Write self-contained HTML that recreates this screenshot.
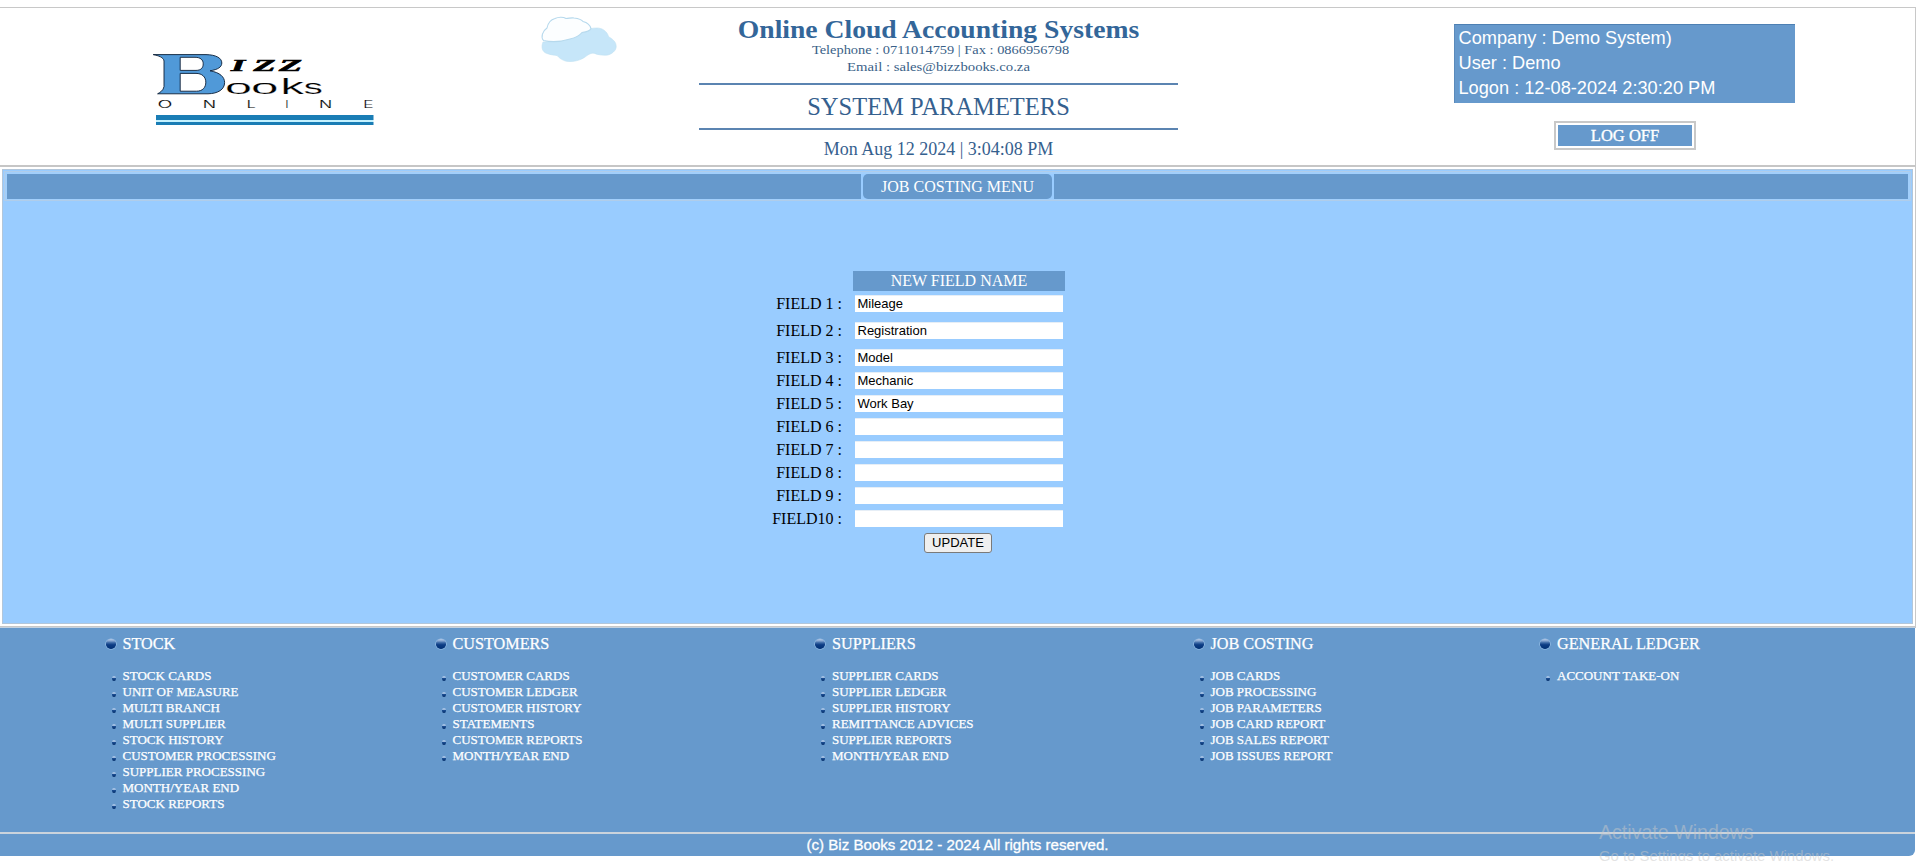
<!DOCTYPE html>
<html>
<head>
<meta charset="utf-8">
<style>
html,body{margin:0;padding:0;background:#fff;width:1919px;height:861px;overflow:hidden;position:relative;}
.a{position:absolute;white-space:nowrap;line-height:1;}
.serif{font-family:"Liberation Serif",serif;}
.sans{font-family:"Liberation Sans",sans-serif;}
.ctr{text-align:center;}
.bb{width:10px;height:10px;border-radius:50%;background:linear-gradient(#b8cce8 0%,#8aa8d2 18%,#3a68a6 38%,#0c3c84 58%,#003074 100%);box-shadow:0 0 0 0.6px rgba(170,205,240,0.8);}
.sb{width:4.6px;height:5px;border-radius:50%;background:linear-gradient(#a8c4e6 0%,#a8c4e6 28%,#1a4c90 50%,#002a66 100%);}
.fi{font-size:13px;color:#fff;-webkit-text-stroke:0.25px #fff;}
.fh{font-size:16.2px;color:#fff;-webkit-text-stroke:0.25px #fff;}
</style>
</head>
<body>
<div class="a" style="left:0;top:7px;width:1915px;height:1px;background:#c8c8c8"></div>
<div class="a" style="left:1915px;top:7px;width:1px;height:621px;background:#c8c8c8"></div>
<div class="a" style="left:0;top:165px;width:1915px;height:2px;background:#c6c6c6"></div>
<svg class="a" style="left:0;top:0" width="640" height="165" viewBox="0 0 640 165">
<path d="M153.2 54.6 L206 54.6 C216 54.8 221.8 58 221.8 63 C221.8 67 218 69.6 210 70.8 C220 72.5 224.6 77 224.6 82.5 C224.6 89.5 218 93.6 208 93.8 L157.6 93.8 C159.5 92.8 163.6 90.5 164 86.5 L164 61 C163.8 57.5 158.5 55.6 153.2 54.6 Z M180.2 57.3 L180.2 70.4 L196 70.4 C201 70.4 203.2 67.8 203.2 63.8 C203.2 59.8 200.5 57.3 195 57.3 Z M180.2 73.4 L180.2 91.2 L196.5 91.2 C202.6 91.2 205.8 87.5 205.8 82.2 C205.8 76.8 202 73.4 196 73.4 Z" fill="#5099d8" fill-rule="evenodd" stroke="#0c1e36" stroke-width="0.9"/>
<g font-family="Liberation Serif" font-weight="bold" font-style="italic" font-size="16.8" fill="#000" stroke="#000" stroke-width="0.6">
<text x="231" y="70.9" textLength="14" lengthAdjust="spacingAndGlyphs">I</text>
<text x="253.5" y="70.9" textLength="22" lengthAdjust="spacingAndGlyphs">Z</text>
<text x="279" y="70.9" textLength="23" lengthAdjust="spacingAndGlyphs">Z</text>
</g>
<g font-family="Liberation Sans" font-size="21" fill="#000" stroke="#fff" stroke-width="0.2">
<text x="225" y="93.5" textLength="27" lengthAdjust="spacingAndGlyphs">o</text>
<text x="251" y="93.5" textLength="27.5" lengthAdjust="spacingAndGlyphs">o</text>
<text x="280.5" y="93.5" font-size="22.5" textLength="23.5" lengthAdjust="spacingAndGlyphs">k</text>
<text x="303.8" y="93.5" textLength="19" lengthAdjust="spacingAndGlyphs">s</text>
</g>
<g font-family="Liberation Sans" font-size="10" fill="#000" stroke="#fff" stroke-width="0.12">
<text x="157.8" y="107.6" textLength="14.4" lengthAdjust="spacingAndGlyphs">O</text>
<text x="202.7" y="107.6" textLength="13.3" lengthAdjust="spacingAndGlyphs">N</text>
<text x="246.8" y="107.6" textLength="8.7" lengthAdjust="spacingAndGlyphs">L</text>
<text x="285.6" y="107.6" textLength="2.8" lengthAdjust="spacingAndGlyphs">I</text>
<text x="319" y="107.6" textLength="13.2" lengthAdjust="spacingAndGlyphs">N</text>
<text x="363.4" y="107.6" textLength="9.6" lengthAdjust="spacingAndGlyphs">E</text>
</g>
<rect x="156" y="115" width="217.5" height="5" fill="#1a7db5"/>
<rect x="156" y="120" width="217.5" height="2" fill="#c4f2ff"/>
<rect x="156" y="122" width="217.5" height="3" fill="#1a7db5"/>
<path d="M543 42 C541 47 542 52 547 53.5 C551 55 554 55 557 55.5 C561 60 566 61.8 570 61.5 C577 61.5 583 59 587 55.5 C590 53.5 592 53 594 53.2 C598 55 603 55.5 608 55 C614 53 617 49 616 45 C615.5 41 612 39 608.5 36.5 C607 31 602 28 597 28 C592 28 589 29 587 30 L560 41 Z" fill="#c6e6f9" stroke="#c0e0f2" stroke-width="0.6"/>
<path d="M543.5 40.5 C540.5 37 542.5 31 547 28 C548 23 551 19.5 555 18.5 C558 17 563 16.5 566 18.5 C569 18.5 571 17.5 574 18 C578 18.5 582 20 583 21.5 C587 22.5 590 25 591 28.5 C590 31 586 32 582 32.5 C580 35 576 37.5 570 39 C562 41.5 552 42.5 543.5 40.5 Z" fill="#fcfeff" stroke="#b6d9ed" stroke-width="1.1"/>
</svg>
<div class="a serif ctr" style="left:638px;width:601px;top:16.6px;font-size:25px;color:#336699;font-weight:bold;transform:scaleX(1.105);transform-origin:50% 0">Online Cloud Accounting Systems</div>
<div class="a serif ctr" style="left:639.5px;width:601px;top:42.7px;font-size:13.4px;color:#3a5f88;transform:scaleX(1.075);transform-origin:50% 0">Telephone : 0711014759 | Fax : 0866956798</div>
<div class="a serif ctr" style="left:638px;width:601px;top:59.5px;font-size:13.4px;color:#3a5f88;transform:scaleX(1.1);transform-origin:50% 0">Email : sales@bizzbooks.co.za</div>
<div class="a" style="left:699px;top:83px;width:479px;height:2px;background:#5b84b1"></div>
<div class="a serif ctr" style="left:638px;width:601px;top:94.7px;font-size:24.5px;color:#35608e;">SYSTEM PARAMETERS</div>
<div class="a" style="left:699px;top:128px;width:479px;height:2px;background:#5b84b1"></div>
<div class="a serif ctr" style="left:638px;width:601px;top:139.5px;font-size:18px;color:#35608e;">Mon Aug 12 2024 | 3:04:08 PM</div>
<div class="a" style="left:1454px;top:24px;width:340px;height:78px;background:#6699cc;border-top:1px solid #4d80b3;border-left:1px solid #5a8abb"></div>
<div class="a sans" style="left:1458.5px;top:28.5px;font-size:18.2px;color:#fff">Company : Demo System)</div>
<div class="a sans" style="left:1458.5px;top:53.5px;font-size:18.2px;color:#fff">User : Demo</div>
<div class="a sans" style="left:1458.5px;top:78.5px;font-size:18.2px;color:#fff">Logon : 12-08-2024 2:30:20 PM</div>
<div class="a" style="left:1554px;top:121px;width:138px;height:25px;border:2px solid #c8c8c8;background:#fff"></div>
<div class="a" style="left:1558px;top:125px;width:134px;height:21px;background:#6699cc"></div>
<div class="a serif ctr" style="left:1558px;top:128px;width:134px;font-size:16.5px;color:#fff;-webkit-text-stroke:0.35px #fff">LOG OFF</div>
<div class="a" style="left:2px;top:169px;width:1909px;height:453px;border:1px solid #b2c6da;background:#99ccff"></div>
<div class="a" style="left:4px;top:171px;width:1905px;height:28px;border:1px solid #b0cdea;background:#a2cffb"></div>
<div class="a" style="left:7px;top:174px;width:1901px;height:25px;background:#6699cc"></div>
<div class="a" style="left:861px;top:174px;width:193px;height:25px;background:#99ccff"></div>
<div class="a" style="left:863px;top:174px;width:189px;height:25px;background:#6699cc;border-radius:5px"></div>
<div class="a serif ctr" style="left:863px;top:179px;width:189px;font-size:16px;color:#fff">JOB COSTING MENU</div>
<div class="a" style="left:853px;top:271px;width:212px;height:20px;background:#6699cc"></div>
<div class="a serif ctr" style="left:853px;top:273px;width:212px;font-size:16px;color:#fff">NEW FIELD NAME</div>
<div class="a serif" style="left:700px;width:142px;text-align:right;top:296px;font-size:16px;color:#000">FIELD 1 :</div>
<div class="a" style="left:855px;top:295px;width:208px;height:17px;background:#fff;box-shadow:inset 0 1px 0 #e6eef6"></div>
<div class="a sans" style="left:857.5px;top:297px;font-size:13px;color:#000">Mileage</div>
<div class="a serif" style="left:700px;width:142px;text-align:right;top:323px;font-size:16px;color:#000">FIELD 2 :</div>
<div class="a" style="left:855px;top:322px;width:208px;height:17px;background:#fff;box-shadow:inset 0 1px 0 #e6eef6"></div>
<div class="a sans" style="left:857.5px;top:324px;font-size:13px;color:#000">Registration</div>
<div class="a serif" style="left:700px;width:142px;text-align:right;top:350px;font-size:16px;color:#000">FIELD 3 :</div>
<div class="a" style="left:855px;top:349px;width:208px;height:17px;background:#fff;box-shadow:inset 0 1px 0 #e6eef6"></div>
<div class="a sans" style="left:857.5px;top:351px;font-size:13px;color:#000">Model</div>
<div class="a serif" style="left:700px;width:142px;text-align:right;top:373px;font-size:16px;color:#000">FIELD 4 :</div>
<div class="a" style="left:855px;top:372px;width:208px;height:17px;background:#fff;box-shadow:inset 0 1px 0 #e6eef6"></div>
<div class="a sans" style="left:857.5px;top:374px;font-size:13px;color:#000">Mechanic</div>
<div class="a serif" style="left:700px;width:142px;text-align:right;top:396px;font-size:16px;color:#000">FIELD 5 :</div>
<div class="a" style="left:855px;top:395px;width:208px;height:17px;background:#fff;box-shadow:inset 0 1px 0 #e6eef6"></div>
<div class="a sans" style="left:857.5px;top:397px;font-size:13px;color:#000">Work Bay</div>
<div class="a serif" style="left:700px;width:142px;text-align:right;top:419px;font-size:16px;color:#000">FIELD 6 :</div>
<div class="a" style="left:855px;top:418px;width:208px;height:17px;background:#fff;box-shadow:inset 0 1px 0 #e6eef6"></div>
<div class="a serif" style="left:700px;width:142px;text-align:right;top:442px;font-size:16px;color:#000">FIELD 7 :</div>
<div class="a" style="left:855px;top:441px;width:208px;height:17px;background:#fff;box-shadow:inset 0 1px 0 #e6eef6"></div>
<div class="a serif" style="left:700px;width:142px;text-align:right;top:465px;font-size:16px;color:#000">FIELD 8 :</div>
<div class="a" style="left:855px;top:464px;width:208px;height:17px;background:#fff;box-shadow:inset 0 1px 0 #e6eef6"></div>
<div class="a serif" style="left:700px;width:142px;text-align:right;top:488px;font-size:16px;color:#000">FIELD 9 :</div>
<div class="a" style="left:855px;top:487px;width:208px;height:17px;background:#fff;box-shadow:inset 0 1px 0 #e6eef6"></div>
<div class="a serif" style="left:700px;width:142px;text-align:right;top:511px;font-size:16px;color:#000">FIELD10 :</div>
<div class="a" style="left:855px;top:510px;width:208px;height:17px;background:#fff;box-shadow:inset 0 1px 0 #e6eef6"></div>
<div class="a" style="left:924px;top:533px;width:66px;height:18px;border:1px solid #7a7a7a;border-radius:3px;background:#efefef"></div>
<div class="a sans ctr" style="left:924px;top:536px;width:68px;font-size:13px;color:#000">UPDATE</div>
<div class="a" style="left:0;top:626px;width:1915px;height:1px;background:#c8c8c8"></div>
<div class="a" style="left:0;top:627px;width:1915px;height:1px;background:#c4d2e0"></div>
<div class="a" style="left:0;top:628px;width:1915px;height:228px;background:#6699cc;border-bottom-right-radius:6px"></div>
<div class="a" style="left:0;top:832px;width:1915px;height:2px;background:#cad3dc"></div>
<div class="a sans ctr" style="left:0;top:837px;width:1915px;font-size:15.1px;color:#fff;-webkit-text-stroke:0.3px #fff">(c) Biz Books 2012 - 2024 All rights reserved.</div>
<div class="a bb" style="left:106.3px;top:639px;width:9.6px;height:9.6px"></div>
<div class="a serif fh" style="left:122.5px;top:636px">STOCK</div>
<div class="a sb" style="left:111.5px;top:676px"></div>
<div class="a serif fi" style="left:122.5px;top:669px">STOCK CARDS</div>
<div class="a sb" style="left:111.5px;top:692px"></div>
<div class="a serif fi" style="left:122.5px;top:685px">UNIT OF MEASURE</div>
<div class="a sb" style="left:111.5px;top:708px"></div>
<div class="a serif fi" style="left:122.5px;top:701px">MULTI BRANCH</div>
<div class="a sb" style="left:111.5px;top:724px"></div>
<div class="a serif fi" style="left:122.5px;top:717px">MULTI SUPPLIER</div>
<div class="a sb" style="left:111.5px;top:740px"></div>
<div class="a serif fi" style="left:122.5px;top:733px">STOCK HISTORY</div>
<div class="a sb" style="left:111.5px;top:756px"></div>
<div class="a serif fi" style="left:122.5px;top:749px">CUSTOMER PROCESSING</div>
<div class="a sb" style="left:111.5px;top:772px"></div>
<div class="a serif fi" style="left:122.5px;top:765px">SUPPLIER PROCESSING</div>
<div class="a sb" style="left:111.5px;top:788px"></div>
<div class="a serif fi" style="left:122.5px;top:781px">MONTH/YEAR END</div>
<div class="a sb" style="left:111.5px;top:804px"></div>
<div class="a serif fi" style="left:122.5px;top:797px">STOCK REPORTS</div>
<div class="a bb" style="left:436.3px;top:639px;width:9.6px;height:9.6px"></div>
<div class="a serif fh" style="left:452.5px;top:636px">CUSTOMERS</div>
<div class="a sb" style="left:441.5px;top:676px"></div>
<div class="a serif fi" style="left:452.5px;top:669px">CUSTOMER CARDS</div>
<div class="a sb" style="left:441.5px;top:692px"></div>
<div class="a serif fi" style="left:452.5px;top:685px">CUSTOMER LEDGER</div>
<div class="a sb" style="left:441.5px;top:708px"></div>
<div class="a serif fi" style="left:452.5px;top:701px">CUSTOMER HISTORY</div>
<div class="a sb" style="left:441.5px;top:724px"></div>
<div class="a serif fi" style="left:452.5px;top:717px">STATEMENTS</div>
<div class="a sb" style="left:441.5px;top:740px"></div>
<div class="a serif fi" style="left:452.5px;top:733px">CUSTOMER REPORTS</div>
<div class="a sb" style="left:441.5px;top:756px"></div>
<div class="a serif fi" style="left:452.5px;top:749px">MONTH/YEAR END</div>
<div class="a bb" style="left:815.3px;top:639px;width:9.6px;height:9.6px"></div>
<div class="a serif fh" style="left:832px;top:636px">SUPPLIERS</div>
<div class="a sb" style="left:820.5px;top:676px"></div>
<div class="a serif fi" style="left:832px;top:669px">SUPPLIER CARDS</div>
<div class="a sb" style="left:820.5px;top:692px"></div>
<div class="a serif fi" style="left:832px;top:685px">SUPPLIER LEDGER</div>
<div class="a sb" style="left:820.5px;top:708px"></div>
<div class="a serif fi" style="left:832px;top:701px">SUPPLIER HISTORY</div>
<div class="a sb" style="left:820.5px;top:724px"></div>
<div class="a serif fi" style="left:832px;top:717px">REMITTANCE ADVICES</div>
<div class="a sb" style="left:820.5px;top:740px"></div>
<div class="a serif fi" style="left:832px;top:733px">SUPPLIER REPORTS</div>
<div class="a sb" style="left:820.5px;top:756px"></div>
<div class="a serif fi" style="left:832px;top:749px">MONTH/YEAR END</div>
<div class="a bb" style="left:1194.3px;top:639px;width:9.6px;height:9.6px"></div>
<div class="a serif fh" style="left:1210.5px;top:636px">JOB COSTING</div>
<div class="a sb" style="left:1199.5px;top:676px"></div>
<div class="a serif fi" style="left:1210.5px;top:669px">JOB CARDS</div>
<div class="a sb" style="left:1199.5px;top:692px"></div>
<div class="a serif fi" style="left:1210.5px;top:685px">JOB PROCESSING</div>
<div class="a sb" style="left:1199.5px;top:708px"></div>
<div class="a serif fi" style="left:1210.5px;top:701px">JOB PARAMETERS</div>
<div class="a sb" style="left:1199.5px;top:724px"></div>
<div class="a serif fi" style="left:1210.5px;top:717px">JOB CARD REPORT</div>
<div class="a sb" style="left:1199.5px;top:740px"></div>
<div class="a serif fi" style="left:1210.5px;top:733px">JOB SALES REPORT</div>
<div class="a sb" style="left:1199.5px;top:756px"></div>
<div class="a serif fi" style="left:1210.5px;top:749px">JOB ISSUES REPORT</div>
<div class="a bb" style="left:1540.3px;top:639px;width:9.6px;height:9.6px"></div>
<div class="a serif fh" style="left:1557px;top:636px">GENERAL LEDGER</div>
<div class="a sb" style="left:1545.5px;top:676px"></div>
<div class="a serif fi" style="left:1557px;top:669px">ACCOUNT TAKE-ON</div>
<div class="a sans" style="left:1599px;top:823px;font-size:19.6px;color:rgba(200,200,200,0.5)">Activate Windows</div>
<div class="a sans" style="left:1599px;top:848.6px;font-size:14.9px;color:rgba(200,200,200,0.5)">Go to Settings to activate Windows.</div>
</body>
</html>
